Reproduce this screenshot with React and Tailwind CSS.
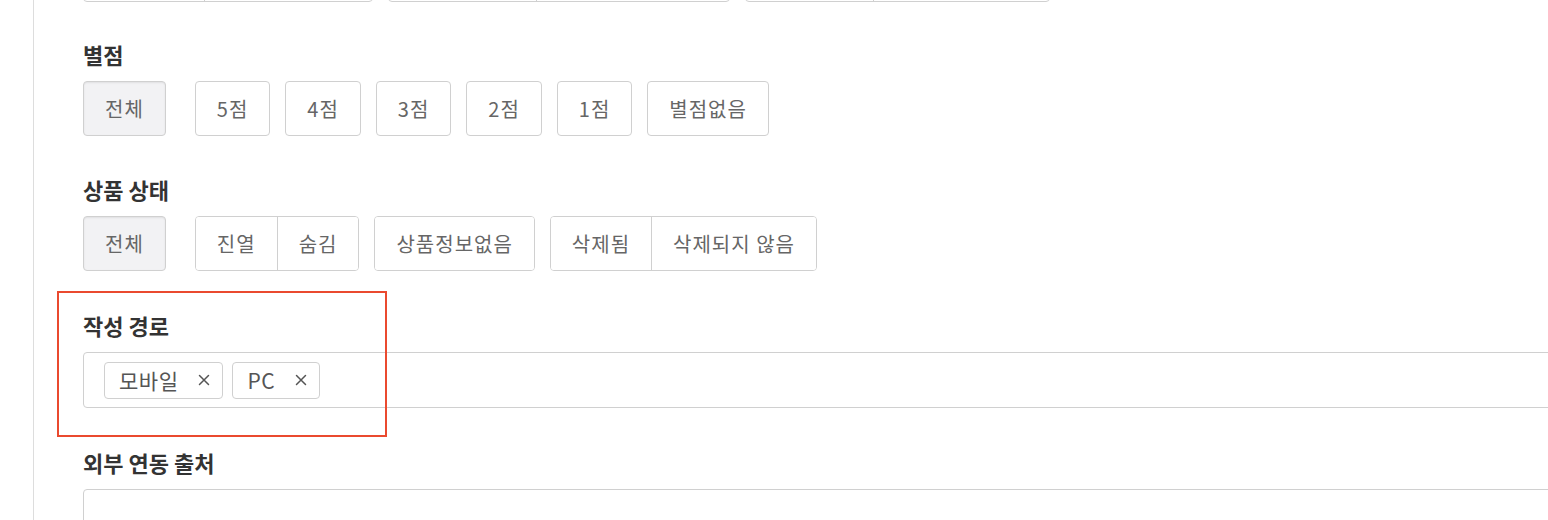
import React from 'react';

const FONT = "font-['Noto_Sans_CJK_KR','Noto_Sans',sans-serif]";

const Label = ({ children }) => (
  <div className="text-[22px] font-bold leading-[28px] text-[#333] mb-[13px]">{children}</div>
);

const Btn = ({ children, active, className = '' }) => (
  <button
    type="button"
    className={
      'h-[55px] px-[21px] text-[20px] tracking-[1px] leading-none text-[#666] border border-[#d0d0d0] rounded-[4px] shrink-0 ' +
      (active ? 'bg-[#f2f2f4] shadow-[inset_0_1px_2px_rgba(0,0,0,0.08)] ' : 'bg-white ') +
      className
    }
  >
    {children}
  </button>
);

// segmented group: buttons share borders
const Group = ({ items }) => (
  <div className="flex shrink-0 border border-[#d0d0d0] rounded-[4px] overflow-hidden">
    {items.map((t, i) => (
      <button
        key={t}
        type="button"
        className={
          'h-[53px] px-[21px] text-[20px] tracking-[1px] leading-none text-[#666] bg-white ' +
          (i > 0 ? 'border-l border-[#d0d0d0]' : '')
        }
      >
        {t}
      </button>
    ))}
  </div>
);

const XIcon = () => (
  <svg width="12" height="12" viewBox="0 0 12 12" fill="none" stroke="#555" strokeWidth="1.5" strokeLinecap="round">
    <path d="M1.5 1.5l9 9M10.5 1.5l-9 9" />
  </svg>
);

const Tag = ({ children }) => (
  <span className="inline-flex items-center gap-[20px] h-[37px] pl-[14px] pr-[12px] border border-[#d0d0d0] rounded-[4px] text-[21px] tracking-[0.5px] text-[#555] leading-none">
    {children}
    <XIcon />
  </span>
);

// period presets row, mostly scrolled off the top
const TopRow = () => {
  const groups = [
    [121, 167],
    [148, 192],
    [128, 175],
  ];
  return (
    <div className="flex gap-[15px] -mt-[53px]">
      {groups.map((g, gi) => (
        <div key={gi} className="flex h-[55px] border border-[#d0d0d0] rounded-[4px] overflow-hidden">
          <div className="border-r border-[#d0d0d0]" style={{ width: g[0] }} />
          <div style={{ width: g[1] }} />
        </div>
      ))}
    </div>
  );
};

export default function App() {
  return (
    <div className={'w-[1548px] h-[520px] overflow-hidden bg-white flex ' + FONT}>
      <div className="w-[34px] shrink-0 border-r border-[#dddddd]" />
      <div className="pl-[49px] w-[1600px] shrink-0 flex flex-col">
        <TopRow />

        {/* 별점 */}
        <div className="mt-[38px]">
          <Label>별점</Label>
          <div className="flex items-center">
            <Btn active>전체</Btn>
            <div className="flex gap-[15px] ml-[29px]">
              {['5점', '4점', '3점', '2점', '1점', '별점없음'].map((t) => (
                <Btn key={t}>{t}</Btn>
              ))}
            </div>
          </div>
        </div>

        {/* 상품 상태 */}
        <div className="mt-[39px]">
          <Label>상품 상태</Label>
          <div className="flex items-center">
            <Btn active>전체</Btn>
            <div className="flex gap-[15px] ml-[29px]">
              <Group items={['진열', '숨김']} />
              <Group items={['상품정보없음']} />
              <Group items={['삭제됨', '삭제되지 않음']} />
            </div>
          </div>
        </div>

        {/* 작성 경로 */}
        <div className="mt-[40px] relative">
          <Label>작성 경로</Label>
          <div className="h-[56px] border border-[#d0d0d0] rounded-[4px] flex items-center gap-[9px] pl-[20px]">
            <Tag>모바일</Tag>
            <Tag>PC</Tag>
          </div>
          <div className="absolute -left-[26px] -top-[20px] w-[330px] h-[146px] border-2 border-[#ea4a2f] pointer-events-none" />
        </div>

        {/* 외부 연동 출처 */}
        <div className="mt-[40px]">
          <Label>외부 연동 출처</Label>
          <div className="h-[56px] border border-[#d0d0d0] rounded-[4px]" />
        </div>
      </div>
    </div>
  );
}
